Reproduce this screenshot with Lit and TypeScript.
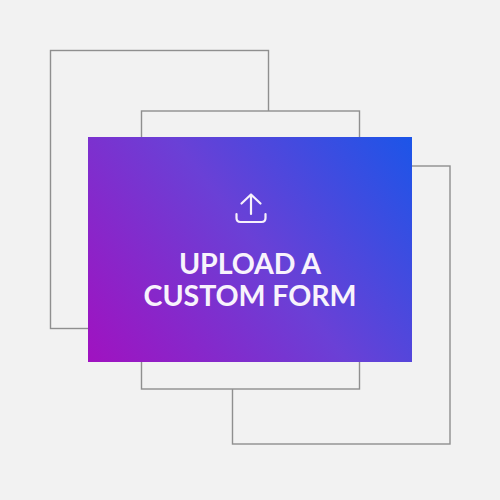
import { LitElement, html, css } from "lit";
import { customElement } from "lit/decorators.js";

@customElement("app-root")
export class AppRoot extends LitElement {
  static styles = css`
    :host { display: block; width: 500px; height: 500px; }
    .canvas {
      position: relative; width: 500px; height: 500px; background: #f2f2f2;
      overflow: hidden; font-family: Lato, "Liberation Sans", sans-serif;
    }
    .frames { position: absolute; inset: 0; width: 500px; height: 500px; display: block; }
    .frames rect { fill: #f2f2f2; stroke: #8f8f8f; stroke-width: 1.4; }
    .card {
      position: absolute; left: 88px; top: 137px; width: 324px; height: 225px;
      background: linear-gradient(232deg, #1c55e8 0%, #6a40d6 48%, #a012c0 100%);
      color: #fff; display: flex; flex-direction: column; align-items: center;
    }
    .icon { display: block; margin-top: 55px; margin-left: 2px; width: 32px; height: 32px; }
    h1 {
      margin: 23px 0 0; font-size: 28.6px; line-height: 32px; font-weight: 700;
      text-align: center; color: #f8f3fc; letter-spacing: -0.1px;
    }
  `;
  render() {
    return html`<div class="canvas">
      <svg class="frames" viewBox="0 0 500 500">
        <rect x="50.5" y="50.500" width="218" height="278"></rect>
        <rect x="232.500" y="166" width="217.500" height="278"></rect>
        <rect x="141.500" y="111" width="218" height="278"></rect>
      </svg>
      <div class="card">
        <svg class="icon" viewBox="0 0 32 32" fill="none" stroke="#f6f1fb" stroke-width="2.200" stroke-linecap="round" stroke-linejoin="round">
          <path d="M16 22V2.500M6.500 11.500L16 2.500L25.500 11.500"/>
          <path d="M1.500 22V26Q1.500 30 5.500 30H26.500Q30.500 30 30.500 26V22"/>
        </svg>
        <h1>UPLOAD A<br />CUSTOM FORM</h1>
      </div>
    </div>`;
  }
}
